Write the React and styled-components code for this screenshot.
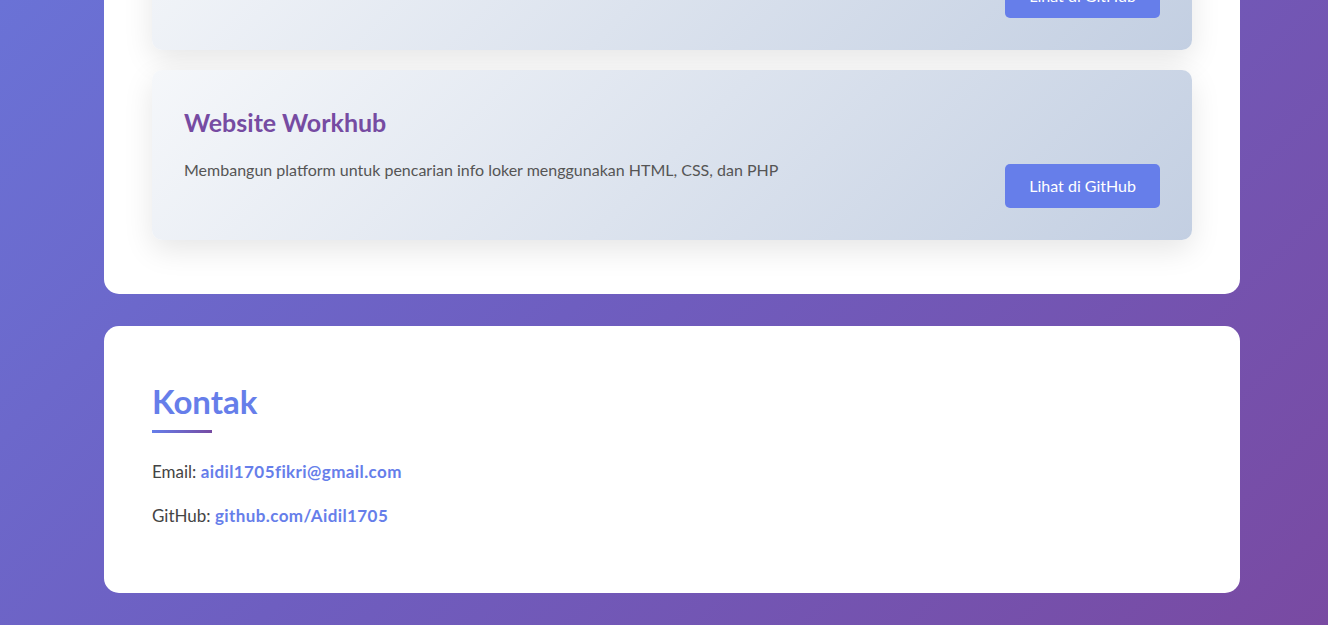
import React from 'react';
import styled, { createGlobalStyle } from 'styled-components';

const GlobalStyle = createGlobalStyle`
  html, body {
    margin: 0;
    padding: 0;
  }
  body {
    font-family: Lato, "Open Sans", sans-serif;
    color: #333;
  }
`;

const Page = styled.div`
  min-height: 100vh;
  overflow: hidden;
  padding-left: 16px;
  background: linear-gradient(135deg, #6a72d6 0%, #6e5ec0 45%, #794aa2 100%);
`;

const Container = styled.main`
  max-width: 1136px;
  margin: -168px auto 0;
  padding-bottom: 32px;
`;

const Section = styled.section`
  background: #fff;
  border-radius: 15px;
  padding: ${(p) => p.$top || 48}px 48px ${(p) => p.$bottom || 48}px;
  margin-bottom: 32px;

  &:last-child {
    margin-bottom: 0;
  }
`;

const ProjectList = styled.div`
  display: flex;
  flex-direction: column;
  gap: 20px;
`;

const ProjectCard = styled.article`
  display: flex;
  justify-content: space-between;
  align-items: flex-end;
  gap: 24px;
  padding: 32px;
  border-radius: 10px;
  background: linear-gradient(135deg, #f5f7fa 0%, #c3cfe2 100%);
  box-shadow: 0 10px 30px rgba(0, 0, 0, 0.1);
`;

const ProjectInfo = styled.div`
  flex: 1;
`;

const ProjectTitle = styled.h3`
  margin: 0 0 14.5px;
  font-size: 25px;
  line-height: 40px;
  font-weight: 700;
  color: #764ba2;
`;

const ProjectDesc = styled.p`
  margin: 0 0 26px;
  font-size: 16px;
  line-height: 1.6;
  color: #555;
`;

const GithubButton = styled.a`
  display: inline-block;
  padding: 12px 24px;
  background: #667eea;
  color: #fff;
  font-size: 16px;
  line-height: 20px;
  border-radius: 5px;
  text-decoration: none;
  cursor: pointer;

  &:hover {
    background: #5a6fd6;
  }
`;

const SectionTitle = styled.h2`
  position: relative;
  margin: 0 0 36px;
  font-size: 33px;
  line-height: 1.2;
  font-weight: 700;
  color: #667eea;

  &::after {
    content: '';
    position: absolute;
    left: 0;
    bottom: -11px;
    width: 60px;
    height: 3px;
    background: linear-gradient(90deg, #667eea, #764ba2);
  }
`;

const ContactLine = styled.p`
  margin: 0 0 16px;
  font-size: 17px;
  line-height: 28px;
  color: #444;
`;

const ContactLink = styled.a`
  color: #667eea;
  font-weight: 700;
  letter-spacing: 0.4px;
  text-decoration: none;
`;

const projects = [
  {
    title: 'Aplikasi Kasir Sederhana',
    desc: 'Membuat aplikasi kasir sederhana menggunakan Java dan MySQL',
  },
  {
    title: 'Website Workhub',
    desc: 'Membangun platform untuk pencarian info loker menggunakan HTML, CSS, dan PHP',
  },
];

const App = () => {
  return (
    <Page>
      <GlobalStyle />
      <Container>
        <Section $bottom={54}>
          <ProjectList>
            {projects.map((p) => (
              <ProjectCard key={p.title}>
                <ProjectInfo>
                  <ProjectTitle>{p.title}</ProjectTitle>
                  <ProjectDesc>{p.desc}</ProjectDesc>
                </ProjectInfo>
                <GithubButton href="#">Lihat di GitHub</GithubButton>
              </ProjectCard>
            ))}
          </ProjectList>
        </Section>

        <Section $top={56} $bottom={47}>
          <SectionTitle>Kontak</SectionTitle>
          <ContactLine>
            Email: <ContactLink href="#">aidil1705fikri@gmail.com</ContactLink>
          </ContactLine>
          <ContactLine>
            GitHub: <ContactLink href="#">github.com/Aidil1705</ContactLink>
          </ContactLine>
        </Section>
      </Container>
    </Page>
  );
};

export default App;
